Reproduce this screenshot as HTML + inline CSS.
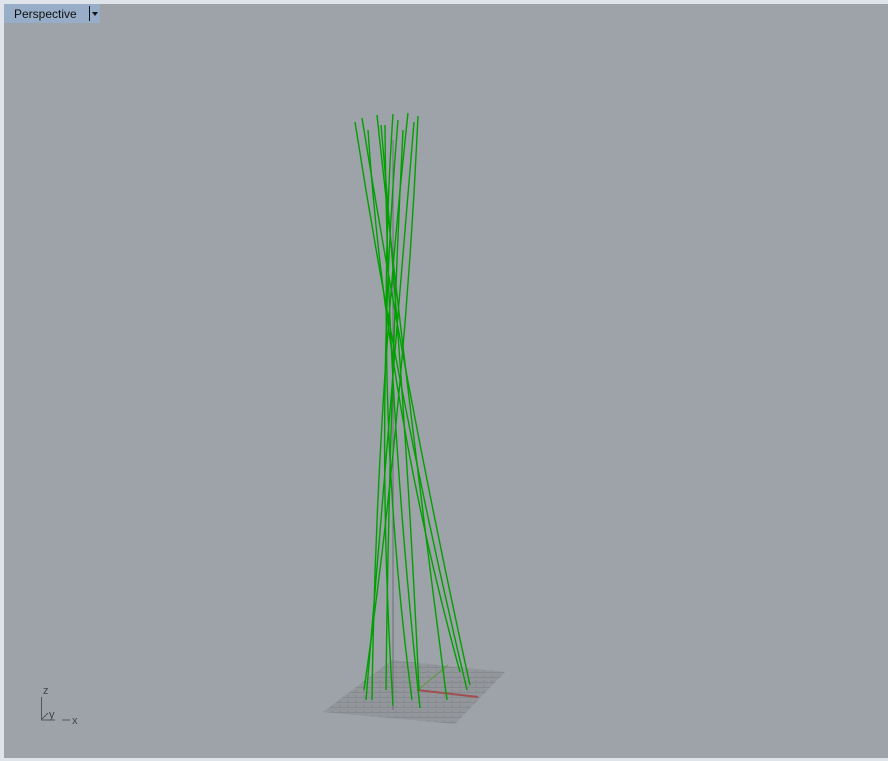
<!DOCTYPE html>
<html><head><meta charset="utf-8"><style>
html,body{margin:0;padding:0;}
body{width:888px;height:761px;background:#dfe3ea;position:relative;overflow:hidden;font-family:"Liberation Sans",sans-serif;}
#vp{position:absolute;left:4px;top:4px;width:884px;height:754px;background:#9ea3aa;}
#tab{position:absolute;left:4px;top:4px;width:96px;height:19px;background:#98aec8;font-size:12px;color:#111;}
#tab span{position:absolute;left:10px;top:3px;}
#tab i{position:absolute;left:85px;top:2px;width:1px;height:15px;background:#111;}
#tab b{position:absolute;left:88px;top:8px;width:0;height:0;border-left:3.5px solid transparent;border-right:3.5px solid transparent;border-top:4px solid #111;}
svg{position:absolute;left:0;top:0;}
</style></head><body>
<div id="vp"></div>
<div id="tab"><span>Perspective</span><i></i><b></b></div>
<svg width="888" height="761" viewBox="0 0 888 761">
<defs>
<pattern id="g" width="8" height="5" patternUnits="userSpaceOnUse">
<rect width="8" height="5" fill="#93969b"/>
<path d="M0 2.5H8M4 0V2.5" stroke="#868a8f" stroke-width="1"/>
</pattern>
</defs>
<polygon points="323,712 392,660 505,672 455,724" fill="url(#g)"/>
<line x1="418" y1="690" x2="448" y2="665" stroke="#5a9a3a" stroke-width="1"/>
<line x1="417" y1="690" x2="478" y2="697" stroke="#a05050" stroke-width="2"/>
<line x1="393" y1="140" x2="393" y2="710" stroke="#6b6f74" stroke-width="1"/>
<g stroke="#00a000" stroke-width="1.4" fill="none">
<path d="M355,122 Q399,404 467,690"/>
<path d="M362,118 Q408,404 470,685"/>
<path d="M368,130 Q386,404 460,672"/>
<path d="M377,115 Q408,404 447,700"/>
<path d="M385,125 Q387,404 420,708"/>
<path d="M393,114 Q373,404 412,700"/>
<path d="M398,120 Q374,404 393,706"/>
<path d="M403,130 Q389,404 386,690"/>
<path d="M408,113 Q376,404 372,700"/>
<path d="M414,122 Q390,404 366,700"/>
<path d="M418,116 Q405,404 364,690"/>
<path d="M381,125 Q406,404 419,690"/>
</g>
<g stroke="#555" stroke-width="1" fill="none">
<path d="M41.5,697V720H55"/><path d="M62,720H70"/><path d="M42,719L48,713"/>
</g>
<text x="43" y="694" font-size="11" fill="#444" font-family="Liberation Sans,sans-serif">z</text>
<text x="49" y="718" font-size="11" fill="#444" font-family="Liberation Sans,sans-serif">y</text>
<text x="72" y="724" font-size="11" fill="#444" font-family="Liberation Sans,sans-serif">x</text>
</svg>
</body></html>
